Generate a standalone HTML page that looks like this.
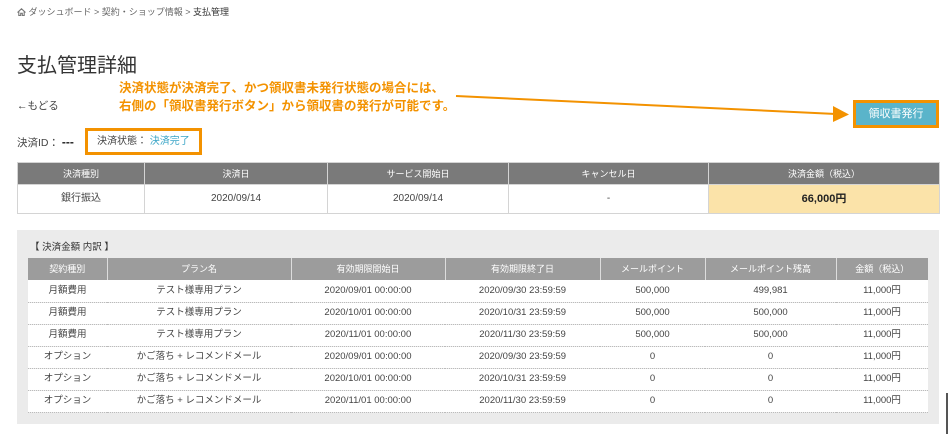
<!DOCTYPE html>
<html><head><meta charset="utf-8"><style>
*{margin:0;padding:0;box-sizing:border-box}
body{width:948px;height:434px;background:#fff;font-family:"Liberation Sans","Noto Sans CJK JP",sans-serif;color:#333;position:relative;overflow:hidden}
.a{position:absolute;white-space:nowrap}
table{border-collapse:collapse;position:absolute;table-layout:fixed}
td,th{text-align:center;font-weight:normal;overflow:hidden;white-space:nowrap;vertical-align:middle;line-height:12px}
.t1 th{background:#7a7a7a;color:#fff;font-size:9px;height:22px;border:1px solid #d4d4d4}
.t1 td{background:#fff;font-size:10px;height:29px;border:1px solid #d4d4d4;color:#444}
.t2 th{background:#9c9c9c;color:#fff;font-size:9px;height:22px;border-left:1px solid #ddd}
.t2 th:first-child{border-left:none}
.t2 td{background:#fff;font-size:9.5px;height:22px;border-bottom:1px dotted #bbb;color:#444}
</style></head><body>
<div class="a" style="left:17px;top:6px;font-size:9px;color:#666;line-height:12px"><svg width="9" height="8" viewBox="0 0 9 8" style="vertical-align:-1px"><path d="M0.5 4.5L4.5 0.8L8.5 4.5M1.8 3.5V7.5H3.7V5.3H5.3V7.5H7.2V3.5" fill="none" stroke="#777" stroke-width="1.1"/></svg> ダッシュボード &gt; 契約・ショップ情報 &gt; <span style="color:#333">支払管理</span></div>
<div class="a" style="left:17px;top:52px;font-size:20px;color:#333;line-height:28px">支払管理詳細</div>
<div class="a" style="left:119px;top:79px;font-size:12.5px;font-weight:bold;color:#f39200;line-height:18px">決済状態が決済完了、かつ領収書未発行状態の場合には、<br>右側の「領収書発行ボタン」から領収書の発行が可能です。</div>
<div class="a" style="left:17px;top:99px;font-size:10.5px;color:#444;line-height:14px">←もどる</div>
<svg class="a" style="left:0;top:0" width="948" height="434"><line x1="456" y1="96" x2="836" y2="114" stroke="#f39200" stroke-width="2"/><path d="M833 106L849 114.5L833 122Z" fill="#f39200"/></svg>
<div class="a" style="left:853px;top:100px;width:86px;height:28px;border:3px solid #f39200;background:#5ab4ca;color:#fff;font-size:11px;text-align:center;line-height:22px">領収書発行</div>
<div class="a" style="left:17px;top:135px;font-size:10.5px;color:#444;line-height:14px">決済ID： <b style="color:#222;font-size:12px">---</b></div>
<div class="a" style="left:85px;top:128px;width:117px;height:27px;border:3px solid #f39200;font-size:10px;line-height:21px;padding-left:9px;color:#444">決済状態： <span style="color:#3aa5c7">決済完了</span></div>
<table class="t1" style="left:17px;top:162px;width:922px">
<colgroup><col style="width:127px"><col style="width:183px"><col style="width:181px"><col style="width:200px"><col style="width:231px"></colgroup>
<tr><th>決済種別</th><th>決済日</th><th>サービス開始日</th><th>キャンセル日</th><th>決済金額（税込）</th></tr>
<tr><td>銀行振込</td><td>2020/09/14</td><td>2020/09/14</td><td>-</td><td style="background:#fbe3a9;font-weight:bold;font-size:11px;color:#222">66,000円</td></tr>
</table>
<div class="a" style="left:17px;top:230px;width:922px;height:194px;background:#ebebeb"></div>
<div class="a" style="left:30px;top:242px;font-size:9.5px;color:#333;line-height:12px">【 決済金額 内訳 】</div>
<table class="t2" style="left:28px;top:258px;width:900px">
<colgroup><col style="width:79px"><col style="width:184px"><col style="width:154px"><col style="width:155px"><col style="width:105px"><col style="width:131px"><col style="width:92px"></colgroup>
<tr><th>契約種別</th><th>プラン名</th><th>有効期限開始日</th><th>有効期限終了日</th><th>メールポイント</th><th>メールポイント残高</th><th>金額（税込）</th></tr>
<tr><td>月額費用</td><td>テスト様専用プラン</td><td>2020/09/01 00:00:00</td><td>2020/09/30 23:59:59</td><td>500,000</td><td>499,981</td><td>11,000円</td></tr>
<tr><td>月額費用</td><td>テスト様専用プラン</td><td>2020/10/01 00:00:00</td><td>2020/10/31 23:59:59</td><td>500,000</td><td>500,000</td><td>11,000円</td></tr>
<tr><td>月額費用</td><td>テスト様専用プラン</td><td>2020/11/01 00:00:00</td><td>2020/11/30 23:59:59</td><td>500,000</td><td>500,000</td><td>11,000円</td></tr>
<tr><td>オプション</td><td>かご落ち + レコメンドメール</td><td>2020/09/01 00:00:00</td><td>2020/09/30 23:59:59</td><td>0</td><td>0</td><td>11,000円</td></tr>
<tr><td>オプション</td><td>かご落ち + レコメンドメール</td><td>2020/10/01 00:00:00</td><td>2020/10/31 23:59:59</td><td>0</td><td>0</td><td>11,000円</td></tr>
<tr><td>オプション</td><td>かご落ち + レコメンドメール</td><td>2020/11/01 00:00:00</td><td>2020/11/30 23:59:59</td><td>0</td><td>0</td><td>11,000円</td></tr>
</table>
<div class="a" style="left:946px;top:393px;width:2px;height:41px;background:#555"></div>
</body></html>
